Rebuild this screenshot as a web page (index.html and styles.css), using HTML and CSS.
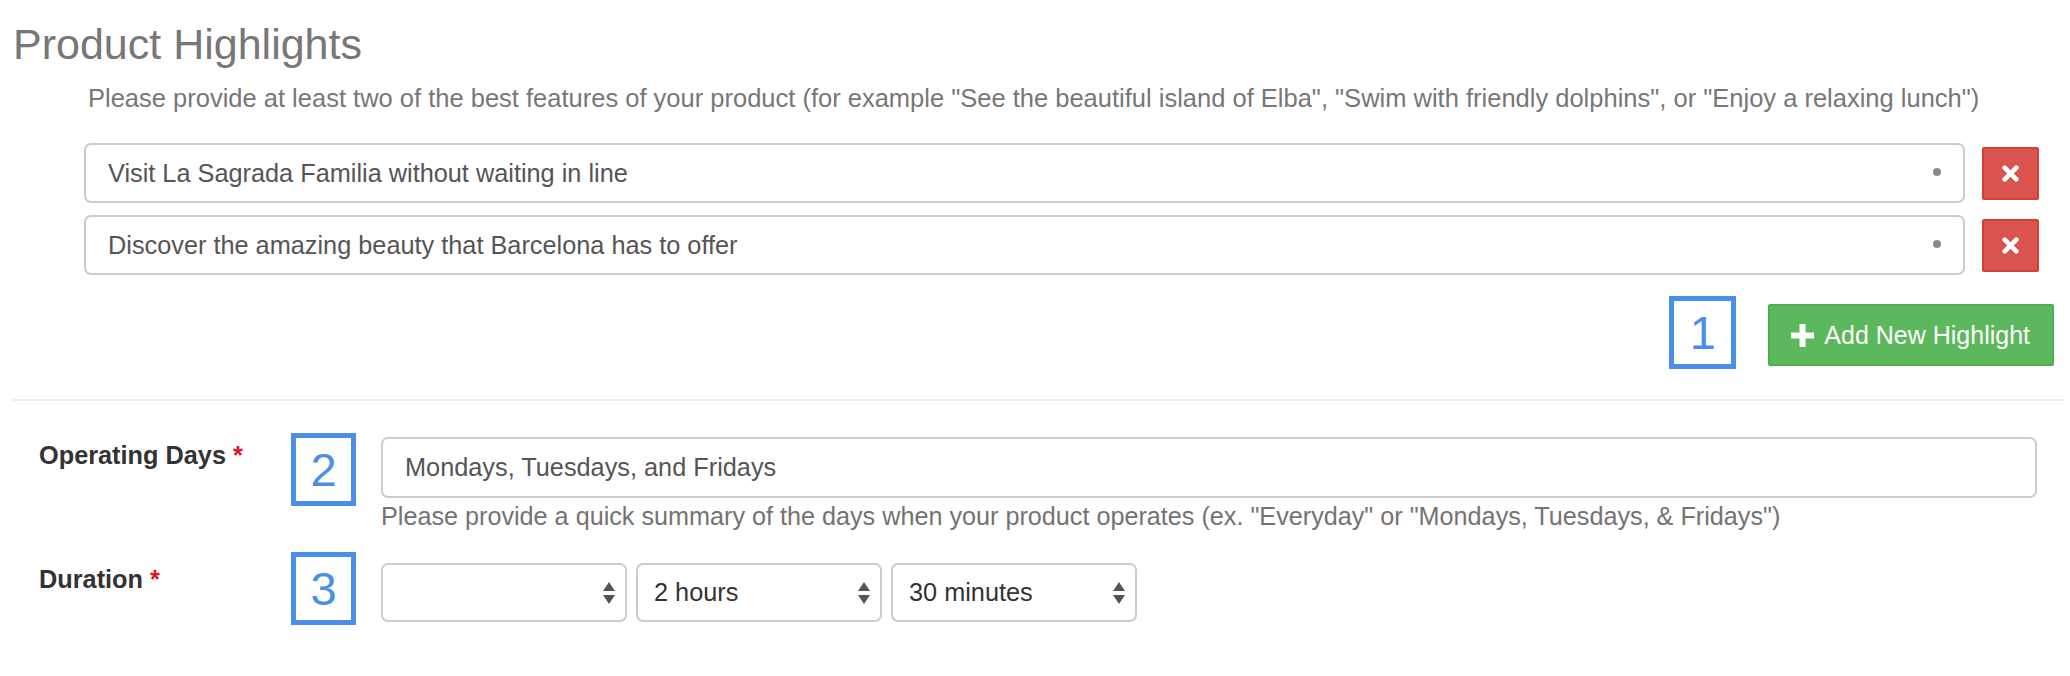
FILE: index.html
```html
<!DOCTYPE html>
<html>
<head>
<meta charset="utf-8">
<link rel="stylesheet" href="styles.css">
</head>
<body>
<div class="page">
  <h1 class="title">Product Highlights</h1>
  <p class="desc">Please provide at least two of the best features of your product (for example "See the beautiful island of Elba", "Swim with friendly dolphins", or "Enjoy a relaxing lunch")</p>

  <div class="highlights">
    <div class="hl-row">
      <div class="field">
        <span class="field-text">Visit La Sagrada Familia without waiting in line</span>
        <span class="dot"></span>
      </div>
      <button class="btn-remove" type="button">
        <svg width="17" height="17" viewBox="0 0 16 16"><path d="M2.5 2.5 L13.5 13.5 M13.5 2.5 L2.5 13.5" stroke="#fff" stroke-width="4.4" stroke-linecap="round"/></svg>
      </button>
    </div>
    <div class="hl-row">
      <div class="field">
        <span class="field-text">Discover the amazing beauty that Barcelona has to offer</span>
        <span class="dot"></span>
      </div>
      <button class="btn-remove" type="button">
        <svg width="17" height="17" viewBox="0 0 16 16"><path d="M2.5 2.5 L13.5 13.5 M13.5 2.5 L2.5 13.5" stroke="#fff" stroke-width="4.4" stroke-linecap="round"/></svg>
      </button>
    </div>
  </div>

  <div class="add-row">
    <div class="marker">1</div>
    <button class="btn-add" type="button">
      <svg width="23" height="23" viewBox="0 0 23 23"><path d="M8.5 0 H14.5 V8.5 H23 V14.5 H14.5 V23 H8.5 V14.5 H0 V8.5 H8.5 Z" fill="#fff"/></svg>
      <span>Add New Highlight</span>
    </button>
  </div>

  <hr class="sep">

  <div class="form-row row-days">
    <div class="label">Operating Days <span class="req">*</span></div>
    <div class="marker">2</div>
    <div class="control">
      <div class="field field-days"><span class="field-text">Mondays, Tuesdays, and Fridays</span></div>
      <div class="help">Please provide a quick summary of the days when your product operates (ex. "Everyday" or "Mondays, Tuesdays, &amp; Fridays")</div>
    </div>
  </div>

  <div class="form-row row-duration">
    <div class="label">Duration <span class="req">*</span></div>
    <div class="marker">3</div>
    <div class="control selects">
      <div class="select"><span></span>
        <svg class="arrows" width="12" height="22" viewBox="0 0 12 22"><path d="M6 0 L12 9 H0 Z M0 13 H12 L6 22 Z" fill="#555"/></svg>
      </div>
      <div class="select"><span>2 hours</span>
        <svg class="arrows" width="12" height="22" viewBox="0 0 12 22"><path d="M6 0 L12 9 H0 Z M0 13 H12 L6 22 Z" fill="#555"/></svg>
      </div>
      <div class="select"><span>30 minutes</span>
        <svg class="arrows" width="12" height="22" viewBox="0 0 12 22"><path d="M6 0 L12 9 H0 Z M0 13 H12 L6 22 Z" fill="#555"/></svg>
      </div>
    </div>
  </div>
</div>
</body>
</html>
```

FILE: styles.css
```css
html, body {
  margin: 0;
  padding: 0;
  background: #fff;
}

body {
  font-family: "Liberation Sans", Arial, Helvetica, sans-serif;
  color: #333;
}

.page {
  padding: 0 5px 40px 13px;
}

.title {
  margin: 21px 0 0 0;
  font-size: 43px;
  line-height: 47px;
  font-weight: normal;
  color: #777;
}

.desc {
  margin: 15px 0 0 75px;
  font-size: 25.5px;
  line-height: 30px;
  color: #777;
}

.highlights {
  margin: 30px 26px 0 71px;
  display: flex;
  flex-direction: column;
  gap: 12px;
}

.hl-row {
  display: flex;
  align-items: center;
  gap: 17px;
}

.field {
  position: relative;
  flex: 1;
  height: 60px;
  box-sizing: border-box;
  border: 2px solid #ccc;
  border-radius: 7px;
  background: #fff;
  display: flex;
  align-items: center;
  padding: 0 22px;
  font-size: 25.3px;
  color: #555;
}

.dot {
  position: absolute;
  right: 22px;
  top: 23px;
  width: 8px;
  height: 8px;
  border-radius: 50%;
  background: #8a8a8a;
}

.btn-remove {
  width: 57px;
  height: 53px;
  box-sizing: border-box;
  border: 2px solid #d43f3a;
  background: #d9534f;
  border-radius: 2px;
  padding: 0;
  display: flex;
  align-items: center;
  justify-content: center;
}

.add-row {
  margin: 21px 11px 0 0;
  display: flex;
  justify-content: flex-end;
  align-items: flex-start;
  gap: 32px;
}

.marker {
  width: 67px;
  height: 73px;
  box-sizing: border-box;
  border: 5px solid #4a8ee8;
  background: #fff;
  color: #4a8ee8;
  font-size: 47px;
  line-height: 63px;
  text-align: center;
}

.btn-add {
  margin-top: 8px;
  height: 62px;
  box-sizing: border-box;
  border: 2px solid #4cae4c;
  background: #5cb85c;
  border-radius: 2px;
  padding: 0 22px 0 21px;
  color: #fff;
  font-family: "Liberation Sans", Arial, Helvetica, sans-serif;
  font-size: 25px;
  display: flex;
  align-items: center;
  gap: 10px;
}

.sep {
  margin: 30px 0 0 0;
  border: 0;
  border-top: 2px solid #eee;
}

.form-row {
  display: grid;
  grid-template-columns: 253px 65px 1fr;
  column-gap: 25px;
  align-items: start;
  margin-right: 28px;
}

.row-days {
  margin-top: 32px;
}

.row-duration {
  margin-top: 19px;
}

.label {
  padding-left: 26px;
  font-size: 25.3px;
  line-height: 36px;
  font-weight: bold;
  color: #333;
  margin-top: 4px;
}

.row-duration .label {
  margin-top: 9px;
}

.req {
  color: #e0151b;
}

.form-row .marker {
  width: 65px;
}

.row-days .control {
  margin-top: 4px;
}

.field-days {
  flex: none;
  height: 61px;
}

.help {
  margin-top: 1px;
  font-size: 25.2px;
  line-height: 34px;
  color: #737373;
}

.selects {
  margin-top: 11px;
  display: flex;
  gap: 9px;
}

.select {
  width: 246px;
  height: 59px;
  box-sizing: border-box;
  border: 2px solid #ccc;
  border-radius: 7px;
  background: #fff;
  display: flex;
  align-items: center;
  justify-content: space-between;
  padding: 0 10px 0 16px;
  font-size: 25.3px;
  color: #333;
}
```
